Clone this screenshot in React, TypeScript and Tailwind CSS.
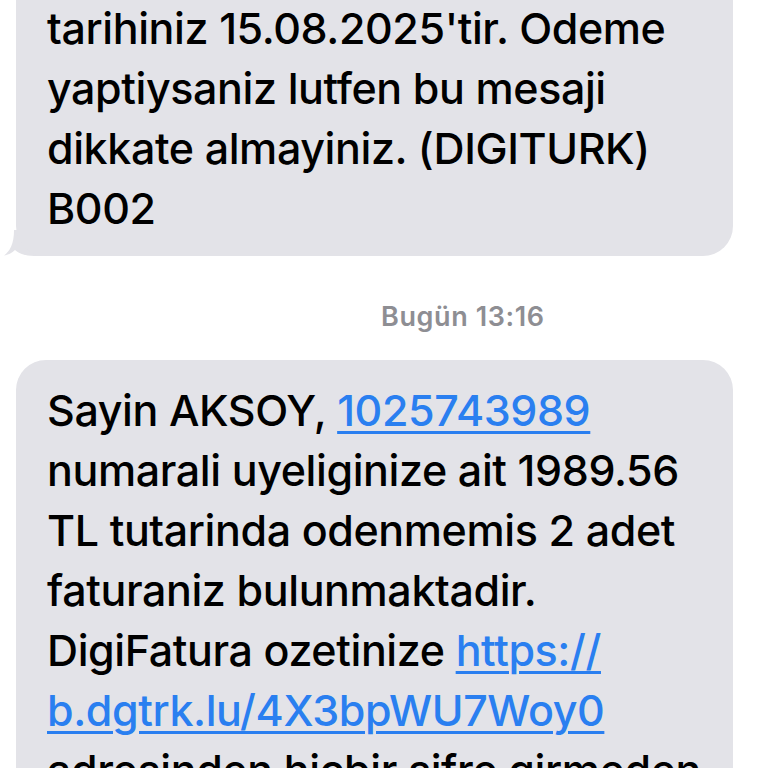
// SMS thread — two incoming Digiturk messages with a timestamp between them.
const font = { fontFamily: 'Inter, "Liberation Sans", Arial, sans-serif' };

function Tail() {
  return (
    <svg
      className="absolute -left-[12px] bottom-0"
      width="44"
      height="26"
      viewBox="0 0 44 26"
    >
      <path
        d="M44 0 L44 26 L30 26 C22 26 16 24 11 20 C8 23 4 25 0 25.5 C6 21 10 14 10 0 Z"
        fill="#e3e3e8"
      />
    </svg>
  );
}

function Link({ children }: { children: React.ReactNode }) {
  return (
    <span className="text-[#2a7ff0] underline decoration-[3px] underline-offset-[5px]">
      {children}
    </span>
  );
}

export default function App() {
  return (
    <div
      className="w-[768px] h-[768px] overflow-hidden bg-white text-black antialiased"
      style={font}
    >
      <div className="pl-[16px] pr-[35px]">
        {/* First (earlier) message, top cut off */}
        <div className="relative -mt-[2px]">
          <div className="relative z-10 bg-[#e3e3e8] rounded-b-[30px] pl-[31px] pr-[20px] pb-[18px] text-[43px] leading-[60px] font-medium tracking-[-0.4px]">
            <p>tarihiniz 15.08.2025'tir. Odeme</p>
            <p>yaptiysaniz lutfen bu mesaji</p>
            <p>dikkate almayiniz. (DIGITURK)</p>
            <p>B002</p>
          </div>
          <Tail />
        </div>

        {/* Timestamp */}
        <div className="pt-[44px] pb-[26px] pl-[365px] text-[27px] leading-[34px] font-semibold tracking-[0.6px] text-[#8e8e93]">
          Bugün 13:16
        </div>

        {/* Second message */}
        <div className="bg-[#e3e3e8] rounded-[30px] pl-[31px] pr-[20px] pt-[20px] pb-[18px] text-[43px] leading-[60px] font-medium tracking-[-0.4px]">
          <p>
            Sayin AKSOY, <Link>1025743989</Link>
          </p>
          <p>numarali uyeliginize ait 1989.56</p>
          <p>TL tutarinda odenmemis 2 adet</p>
          <p>faturaniz bulunmaktadir.</p>
          <p>
            DigiFatura ozetinize <Link>https://</Link>
          </p>
          <p>
            <Link>b.dgtrk.lu/4X3bpWU7Woy0</Link>
          </p>
          <p>adresinden hicbir sifre girmeden</p>
        </div>
      </div>
    </div>
  );
}
